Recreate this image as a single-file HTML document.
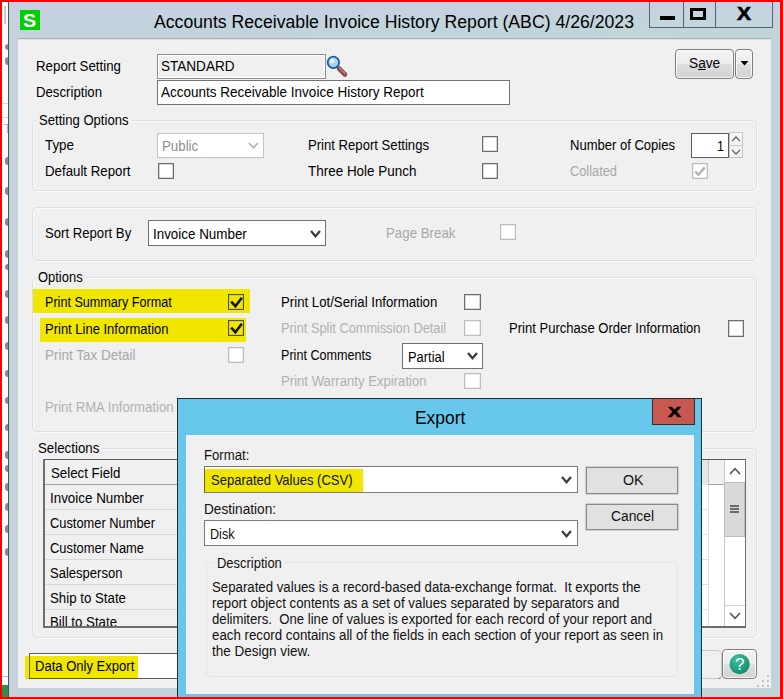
<!DOCTYPE html>
<html lang="en"><head><meta charset="utf-8"><title>Accounts Receivable Invoice History Report</title>
<style>
html,body{margin:0;padding:0;}
body{width:783px;height:699px;overflow:hidden;background:#f00;font-family:"Liberation Sans",sans-serif;}
#root{position:relative;width:783px;height:699px;overflow:hidden;background:#f00;}
#root div{position:absolute;box-sizing:border-box;}
#root svg{position:absolute;overflow:visible;}
.t{position:absolute;white-space:nowrap;transform-origin:0 0;color:#000;}
.cb{background:#fff;border:1px solid #6c6c6c;box-shadow:inset 0 0 0 .5px #b0b0b0;}
.cbd{background:#fff;border:1px solid #b9bfc5;box-shadow:inset 0 0 0 .5px #d5dade;}
.gb{border:1px solid #d7e0e6;border-radius:5px;box-shadow:inset 1px 1px 0 rgba(255,255,255,.7),1px 1px 0 rgba(255,255,255,.7);}
.lbl{background:#f0f0f0;}
.btn7{border:1px solid #7f7f7f;border-radius:4px;background:linear-gradient(#f4f4f4 0%,#ececec 48%,#dedede 52%,#d2d2d2 100%);box-shadow:inset 0 0 0 1px rgba(255,255,255,.75);}
.btnx{border:1px solid #8a8a8a;background:#e1e1e1;box-shadow:0 0 0 .5px #adadad;}
.combo{background:#fff;border:1px solid #707070;}
</style></head><body>
<div id="root">
<div style="left:2px;top:2px;width:7px;height:695px;background:#fff;"></div>
<div style="left:8px;top:2px;width:1px;height:695px;background:#4a4f55;"></div>
<div style="left:2px;top:685px;width:6px;height:12px;background:#2f8f4e;"></div>
<div style="left:2px;top:676px;width:6px;height:1px;background:#bbb;"></div>
<div style="left:5px;top:44px;width:3px;height:6px;background:#5d627a;border-radius:3px 0 0 3px;opacity:.75;"></div>
<div style="left:5px;top:57px;width:3px;height:8px;background:#5d627a;border-radius:3px 0 0 3px;opacity:.75;"></div>
<div style="left:5px;top:157px;width:3px;height:8px;background:#5d627a;border-radius:3px 0 0 3px;opacity:.75;"></div>
<div style="left:5px;top:187px;width:3px;height:8px;background:#5d627a;border-radius:3px 0 0 3px;opacity:.75;"></div>
<div style="left:5px;top:218px;width:3px;height:8px;background:#5d627a;border-radius:3px 0 0 3px;opacity:.75;"></div>
<div style="left:5px;top:250px;width:3px;height:8px;background:#5d627a;border-radius:3px 0 0 3px;opacity:.75;"></div>
<div style="left:5px;top:264px;width:3px;height:6px;background:#5d627a;border-radius:3px 0 0 3px;opacity:.75;"></div>
<div style="left:5px;top:290px;width:3px;height:8px;background:#5d627a;border-radius:3px 0 0 3px;opacity:.75;"></div>
<div style="left:5px;top:316px;width:3px;height:8px;background:#5d627a;border-radius:3px 0 0 3px;opacity:.75;"></div>
<div style="left:5px;top:342px;width:3px;height:8px;background:#5d627a;border-radius:3px 0 0 3px;opacity:.75;"></div>
<div style="left:5px;top:370px;width:3px;height:7px;background:#5d627a;border-radius:3px 0 0 3px;opacity:.75;"></div>
<div style="left:5px;top:397px;width:3px;height:7px;background:#5d627a;border-radius:3px 0 0 3px;opacity:.75;"></div>
<div style="left:5px;top:424px;width:3px;height:7px;background:#5d627a;border-radius:3px 0 0 3px;opacity:.75;"></div>
<div style="left:5px;top:451px;width:3px;height:8px;background:#5d627a;border-radius:3px 0 0 3px;opacity:.75;"></div>
<div style="left:5px;top:465px;width:3px;height:7px;background:#5d627a;border-radius:3px 0 0 3px;opacity:.75;"></div>
<div style="left:5px;top:483px;width:3px;height:8px;background:#5d627a;border-radius:3px 0 0 3px;opacity:.75;"></div>
<div style="left:5px;top:503px;width:3px;height:8px;background:#5d627a;border-radius:3px 0 0 3px;opacity:.75;"></div>
<div style="left:5px;top:525px;width:3px;height:8px;background:#5d627a;border-radius:3px 0 0 3px;opacity:.75;"></div>
<div style="left:5px;top:548px;width:3px;height:8px;background:#5d627a;border-radius:3px 0 0 3px;opacity:.75;"></div>
<div style="left:4px;top:6px;width:2px;height:18px;background:#c9c9c9;"></div>
<div style="left:4px;top:124px;width:4px;height:9px;border:1px solid #b5b5b5;border-bottom:none;border-left:none;"></div>
<div style="left:2px;top:103px;width:6px;height:1px;background:#d9d9d9;"></div>
<div style="left:2px;top:117px;width:6px;height:1px;background:#d9d9d9;"></div>
<div style="left:9px;top:2px;width:771px;height:695px;background:linear-gradient(90deg,#c3d2dd 0%,#c2d4dc 50%,#c0d5da 100%);"></div>
<div style="left:9px;top:2px;width:771px;height:37px;background:linear-gradient(180deg,rgba(202,206,232,.55) 0%,rgba(202,206,232,.5) 36%,rgba(202,206,232,0) 46%);"></div>
<div style="left:18px;top:38px;width:753px;height:1px;background:#a3b0b6;"></div>
<div style="left:18px;top:39px;width:753px;height:649px;background:#f0f0f0;border-top:1px solid #dfe3e7;"></div>
<div style="left:20px;top:10px;width:20px;height:20px;background:#00d000;"></div>
<div style="left:649px;top:2px;width:124px;height:26px;border:1px solid #55626d;border-top:none;background:rgba(200,214,226,.35);"></div>
<div style="left:683px;top:2px;width:1px;height:25px;background:#55626d;"></div>
<div style="left:715px;top:2px;width:1px;height:25px;background:#55626d;"></div>
<div style="left:660px;top:16px;width:15px;height:4px;background:#000;"></div>
<div style="left:690px;top:8px;width:16px;height:12px;border:3px solid #000;border-top-width:3px;"></div>
<div style="left:157px;top:54px;width:169px;height:25px;background:#f0f0f0;border:1px solid #8c8c8c;box-shadow:inset 0 0 0 1px #fff;"></div>
<div style="left:157px;top:80px;width:353px;height:25px;background:#fff;border:1px solid #747474;"></div>
<svg style="left:325px;top:54px" width="24" height="24" viewBox="0 0 24 24"><path d="M14 14.5 L20 20.5" stroke="#8a4b49" stroke-width="4.6" stroke-linecap="round"/><path d="M14.5 14 L20 19.6" stroke="#b98782" stroke-width="1.4" stroke-linecap="round"/><circle cx="8.4" cy="8.4" r="5.7" fill="#a9d2f5" stroke="#1d5fa3" stroke-width="1.8"/><circle cx="7.2" cy="7.0" r="2.4" fill="#e4f2fd"/></svg>
<div class="btn7" style="left:675px;top:49px;width:59px;height:30px;"></div>
<div class="btn7" style="left:735px;top:49px;width:18px;height:30px;"></div>
<svg style="left:740px;top:61px" width="9" height="5" viewBox="0 0 9 5"><path d="M0.5 0 L8.5 0 L4.5 4.6 Z" fill="#000"/></svg>
<div class="gb" style="left:32px;top:120px;width:725px;height:71px;"></div>
<div class="lbl" style="left:36px;top:112px;width:95px;height:16px;"></div>
<div style="left:157px;top:133px;width:107px;height:25px;background:#fff;border:1px solid #c3c3c3;"></div>
<svg style="left:248px;top:142px" width="11" height="7" viewBox="0 0 11 7"><path d="M1 1 L5.5 5.8 L10 1" stroke="#b0b0b0" stroke-width="1.6" fill="none"/></svg>
<div class="cb" style="left:158px;top:163px;width:16px;height:16px;"></div>
<div class="cb" style="left:482px;top:136px;width:16px;height:16px;"></div>
<div class="cb" style="left:482px;top:163px;width:16px;height:16px;"></div>
<div style="left:691px;top:133px;width:38px;height:25px;background:#fff;border:1px solid #5a5a5a;"></div>
<div style="left:729px;top:132px;width:14px;height:14px;background:#f6f6f6;border:1px solid #c8c8c8;"></div>
<div style="left:729px;top:145px;width:14px;height:13px;background:#f6f6f6;border:1px solid #c8c8c8;"></div>
<svg style="left:731px;top:136px" width="10" height="6" viewBox="0 0 10 6"><path d="M1 5 L5 1 L9 5" stroke="#666" stroke-width="1.3" fill="none"/></svg>
<svg style="left:731px;top:149px" width="10" height="6" viewBox="0 0 10 6"><path d="M1 1 L5 5 L9 1" stroke="#666" stroke-width="1.3" fill="none"/></svg>
<div class="cbd" style="left:692px;top:163px;width:16px;height:16px;"></div>
<svg style="left:694px;top:166px" width="12" height="11" viewBox="0 0 12 11"><path d="M1.2 5.4 L4.5 8.8 L10.8 1.4" stroke="#b4b4b4" stroke-width="2.4" fill="none"/></svg>
<div class="gb" style="left:32px;top:207px;width:725px;height:54px;"></div>
<div class="combo" style="left:148px;top:220px;width:178px;height:26px;"></div>
<svg style="left:310px;top:230px" width="11" height="8" viewBox="0 0 11 8"><path d="M1 1 L5.5 6.2 L10 1" stroke="#3c3c3c" stroke-width="2.3" fill="none"/></svg>
<div class="cbd" style="left:500px;top:224px;width:16px;height:16px;"></div>
<div class="gb" style="left:32px;top:277px;width:725px;height:155px;"></div>
<div class="lbl" style="left:36px;top:270px;width:50px;height:15px;"></div>
<div style="left:33px;top:289px;width:217px;height:24px;background:#f0e600;"></div>
<div style="left:40px;top:318px;width:206px;height:24px;background:#f0e600;"></div>
<div class="cb" style="left:228px;top:294px;width:16px;height:16px;background:#f0e600;border:1px solid #5a5600;"></div>
<svg style="left:228px;top:294px" width="16" height="16" viewBox="0 0 16 16"><path d="M3.2 7.6 L7.4 12.2 L13.8 3.8" stroke="#141400" stroke-width="2.6" fill="none"/></svg>
<div class="cb" style="left:228px;top:320px;width:16px;height:16px;background:#f0e600;border:1px solid #5a5600;"></div>
<svg style="left:228px;top:320px" width="16" height="16" viewBox="0 0 16 16"><path d="M3.2 7.6 L7.4 12.2 L13.8 3.8" stroke="#141400" stroke-width="2.6" fill="none"/></svg>
<div class="cbd" style="left:228px;top:347px;width:16px;height:16px;"></div>
<div class="cb" style="left:464px;top:294px;width:17px;height:16px;"></div>
<div class="cbd" style="left:464px;top:320px;width:17px;height:16px;"></div>
<div class="cbd" style="left:464px;top:373px;width:17px;height:16px;"></div>
<div class="combo" style="left:402px;top:343px;width:81px;height:26px;"></div>
<svg style="left:467px;top:352px" width="11" height="8" viewBox="0 0 11 8"><path d="M1 1 L5.5 6.2 L10 1" stroke="#3c3c3c" stroke-width="2.3" fill="none"/></svg>
<div class="cb" style="left:728px;top:320px;width:16px;height:17px;"></div>
<div class="gb" style="left:32px;top:448px;width:725px;height:190px;"></div>
<div class="lbl" style="left:36px;top:440px;width:66px;height:16px;"></div>
<div style="left:43px;top:459px;width:703px;height:169px;background:#f0f0f0;border:2px solid #6e6e6e;border-top-width:1px;border-top-color:#5a5a5a;"></div>
<div style="left:45px;top:509px;width:679px;height:1px;background:#d8d8d8;"></div>
<div style="left:45px;top:534px;width:679px;height:1px;background:#d8d8d8;"></div>
<div style="left:45px;top:559px;width:679px;height:1px;background:#d8d8d8;"></div>
<div style="left:45px;top:584px;width:679px;height:1px;background:#d8d8d8;"></div>
<div style="left:45px;top:609px;width:679px;height:1px;background:#d8d8d8;"></div>
<div style="left:45px;top:484px;width:679px;height:1px;background:#a2a2a2;"></div>
<div style="left:702px;top:485px;width:22px;height:141px;background:#fff;"></div>
<div style="left:702px;top:460px;width:7px;height:25px;background:#e6e6e6;border-right:1px solid #c4c4c4;"></div>
<div style="left:708px;top:485px;width:1px;height:141px;background:#dcdcdc;"></div>
<div style="left:702px;top:509px;width:7px;height:1px;background:#dedede;"></div>
<div style="left:702px;top:534px;width:7px;height:1px;background:#dedede;"></div>
<div style="left:702px;top:559px;width:7px;height:1px;background:#dedede;"></div>
<div style="left:702px;top:584px;width:7px;height:1px;background:#dedede;"></div>
<div style="left:702px;top:609px;width:7px;height:1px;background:#dedede;"></div>
<div style="left:724px;top:460px;width:21px;height:166px;background:#fff;border-left:1px solid #c9c9c9;"></div>
<div style="left:724px;top:482px;width:21px;height:55px;background:#dadada;border:1px solid #bdbdbd;"></div>
<div style="left:730px;top:505px;width:9px;height:2px;background:#6a6a6a;"></div>
<div style="left:730px;top:508px;width:9px;height:2px;background:#6a6a6a;"></div>
<div style="left:730px;top:511px;width:9px;height:2px;background:#6a6a6a;"></div>
<svg style="left:729px;top:467px" width="12" height="8" viewBox="0 0 12 8"><path d="M1 7 L6 1.6 L11 7" stroke="#555" stroke-width="1.6" fill="none"/></svg>
<div style="left:724px;top:605px;width:21px;height:1px;background:#d0d0d0;"></div>
<svg style="left:729px;top:612px" width="12" height="8" viewBox="0 0 12 8"><path d="M1 1 L6 6.4 L11 1" stroke="#555" stroke-width="1.6" fill="none"/></svg>
<div style="left:45px;top:610px;width:300px;height:16px;overflow:hidden;"><span class="t" style="left:4.9px;top:4.3px;font-size:15.5px;line-height:15.5px;transform:scaleX(.855)">Bill to State</span></div>
<div style="left:29px;top:653px;width:693px;height:26px;background:#fff;border:1px solid #5c5c5c;border-right-color:#c8c8c8;border-radius:0 4px 4px 0;"></div>
<div style="left:25px;top:656px;width:113px;height:23px;background:#f0e600;"></div>
<div style="left:29px;top:656px;width:1px;height:23px;background:#6b6810;"></div>
<div style="left:29px;top:678px;width:109px;height:1px;background:#5e5b08;"></div>
<div style="left:702px;top:650px;width:20px;height:29px;background:#f0f0f0;border:1px solid #c9c9c9;border-left:none;border-radius:0 5px 5px 0;"></div>
<div class="btn7" style="left:722px;top:649px;width:35px;height:30px;"></div>
<svg style="left:727px;top:652px" width="25" height="25" viewBox="0 0 25 25"><defs><radialGradient id="hg" cx="40%" cy="30%" r="75%"><stop offset="0" stop-color="#3fc4a0"/><stop offset="1" stop-color="#0c8a68"/></radialGradient></defs><circle cx="12.6" cy="12.1" r="10.1" fill="url(#hg)"/><text x="12.7" y="18.1" text-anchor="middle" font-family="Liberation Sans, sans-serif" font-size="17" fill="#fff">?</text></svg>
<div style="left:767px;top:675px;width:2px;height:2px;background:#bcc4cb;"></div>
<div style="left:762px;top:680px;width:2px;height:2px;background:#bcc4cb;"></div>
<div style="left:767px;top:680px;width:2px;height:2px;background:#bcc4cb;"></div>
<div style="left:757px;top:685px;width:2px;height:2px;background:#bcc4cb;"></div>
<div style="left:762px;top:685px;width:2px;height:2px;background:#bcc4cb;"></div>
<div style="left:767px;top:685px;width:2px;height:2px;background:#bcc4cb;"></div>
<div style="left:177px;top:398px;width:525px;height:299px;background:#66c7ea;border:1px solid #2b2b2b;border-bottom:none;"></div>
<div style="left:186px;top:435px;width:508px;height:259px;background:#f0f0f0;"></div>
<div style="left:652px;top:399px;width:43px;height:26px;background:#c75a50;border:1px solid #3a2a2a;border-top:none;"></div>
<div style="left:204px;top:466px;width:374px;height:27px;background:#fff;border:1px solid #7a7a7a;"></div>
<div style="left:204px;top:469px;width:159px;height:23px;background:#f0e600;border-left:1px solid #6b6800;"></div>
<svg style="left:561px;top:476px" width="11" height="8" viewBox="0 0 11 8"><path d="M1 1 L5.5 6.2 L10 1" stroke="#3c3c3c" stroke-width="2.3" fill="none"/></svg>
<div style="left:204px;top:520px;width:374px;height:26px;background:#fff;border:1px solid #7a7a7a;"></div>
<svg style="left:561px;top:530px" width="11" height="8" viewBox="0 0 11 8"><path d="M1 1 L5.5 6.2 L10 1" stroke="#3c3c3c" stroke-width="2.3" fill="none"/></svg>
<div class="btnx" style="left:586px;top:467px;width:92px;height:27px;"></div>
<div class="btnx" style="left:586px;top:504px;width:92px;height:26px;"></div>
<div style="left:206px;top:562px;width:472px;height:115px;border:1px solid #e1e5e8;border-radius:4px;"></div>
<div class="lbl" style="left:213px;top:555px;width:72px;height:15px;"></div>
<span class="t" style="left:23.3px;top:13px;font-size:17.5px;line-height:17.5px;color:#fff;transform:scaleX(1.1294);font-weight:bold;">S</span>
<span class="t" style="left:154px;top:13px;font-size:18.3px;line-height:18.3px;transform:scaleX(0.9660);">Accounts Receivable Invoice History Report (ABC) 4/26/2023</span>
<span class="t" style="left:736.6px;top:6px;font-size:17.5px;line-height:17.5px;transform:scaleX(1.1979);font-weight:bold;-webkit-text-stroke:.6px #000;">X</span>
<span class="t" style="left:36px;top:58px;font-size:15.5px;line-height:15.5px;transform:scaleX(0.8578);">Report Setting</span>
<span class="t" style="left:36px;top:84px;font-size:15.5px;line-height:15.5px;transform:scaleX(0.8513);">Description</span>
<span class="t" style="left:161px;top:58px;font-size:15.5px;line-height:15.5px;transform:scaleX(0.8739);">STANDARD</span>
<span class="t" style="left:161px;top:84px;font-size:15.5px;line-height:15.5px;transform:scaleX(0.8712);">Accounts Receivable Invoice History Report</span>
<span class="t" style="left:689px;top:55px;font-size:15.5px;line-height:15.5px;transform:scaleX(0.8828);">S<u>a</u>ve</span>
<span class="t" style="left:38.5px;top:112px;font-size:15.5px;line-height:15.5px;transform:scaleX(0.8445);">Setting Options</span>
<span class="t" style="left:45.3px;top:137px;font-size:15.5px;line-height:15.5px;transform:scaleX(0.8629);">Type</span>
<span class="t" style="left:45.3px;top:163px;font-size:15.5px;line-height:15.5px;transform:scaleX(0.8554);">Default Report</span>
<span class="t" style="left:162.3px;top:138px;font-size:15.5px;line-height:15.5px;color:#8e8e8e;transform:scaleX(0.8574);">Public</span>
<span class="t" style="left:307.6px;top:137px;font-size:15.5px;line-height:15.5px;transform:scaleX(0.8461);">Print Report Settings</span>
<span class="t" style="left:307.6px;top:163px;font-size:15.5px;line-height:15.5px;transform:scaleX(0.8684);">Three Hole Punch</span>
<span class="t" style="left:570px;top:137px;font-size:15.5px;line-height:15.5px;transform:scaleX(0.8405);">Number of Copies</span>
<span class="t" style="left:570px;top:163px;font-size:15.5px;line-height:15.5px;color:#a8a8a8;transform:scaleX(0.8264);">Collated</span>
<span class="t" style="left:716.5px;top:138px;font-size:15.5px;line-height:15.5px;transform:scaleX(0.8116);">1</span>
<span class="t" style="left:44.8px;top:225px;font-size:15.5px;line-height:15.5px;transform:scaleX(0.8480);">Sort Report By</span>
<span class="t" style="left:153px;top:226px;font-size:15.5px;line-height:15.5px;transform:scaleX(0.8641);">Invoice Number</span>
<span class="t" style="left:386.3px;top:225px;font-size:15.5px;line-height:15.5px;color:#a8a8a8;transform:scaleX(0.8580);">Page Break</span>
<span class="t" style="left:38.4px;top:269px;font-size:15.5px;line-height:15.5px;transform:scaleX(0.8349);">Options</span>
<span class="t" style="left:45px;top:294px;font-size:15.5px;line-height:15.5px;transform:scaleX(0.8127);">Print Summary Format</span>
<span class="t" style="left:45px;top:321px;font-size:15.5px;line-height:15.5px;transform:scaleX(0.8383);">Print Line Information</span>
<span class="t" style="left:45px;top:347px;font-size:15.5px;line-height:15.5px;color:#a8a8a8;transform:scaleX(0.8696);">Print Tax Detail</span>
<span class="t" style="left:44.8px;top:399px;font-size:15.5px;line-height:15.5px;color:#b0b0b0;transform:scaleX(0.8476);">Print RMA Information</span>
<span class="t" style="left:281.4px;top:294px;font-size:15.5px;line-height:15.5px;transform:scaleX(0.8517);">Print Lot/Serial Information</span>
<span class="t" style="left:281.4px;top:320px;font-size:15.5px;line-height:15.5px;color:#b0b0b0;transform:scaleX(0.8266);">Print Split Commission Detail</span>
<span class="t" style="left:281.4px;top:347px;font-size:15.5px;line-height:15.5px;transform:scaleX(0.8126);">Print Comments</span>
<span class="t" style="left:281.4px;top:373px;font-size:15.5px;line-height:15.5px;color:#b0b0b0;transform:scaleX(0.8479);">Print Warranty Expiration</span>
<span class="t" style="left:407.5px;top:349px;font-size:15.5px;line-height:15.5px;transform:scaleX(0.8330);">Partial</span>
<span class="t" style="left:508.7px;top:320px;font-size:15.5px;line-height:15.5px;transform:scaleX(0.8424);">Print Purchase Order Information</span>
<span class="t" style="left:38.4px;top:440px;font-size:15.5px;line-height:15.5px;transform:scaleX(0.8572);">Selections</span>
<span class="t" style="left:51px;top:465px;font-size:15.5px;line-height:15.5px;transform:scaleX(0.8570);">Select Field</span>
<span class="t" style="left:49.9px;top:490px;font-size:15.5px;line-height:15.5px;transform:scaleX(0.8641);">Invoice Number</span>
<span class="t" style="left:49.9px;top:515px;font-size:15.5px;line-height:15.5px;transform:scaleX(0.8292);">Customer Number</span>
<span class="t" style="left:49.9px;top:540px;font-size:15.5px;line-height:15.5px;transform:scaleX(0.8330);">Customer Name</span>
<span class="t" style="left:49.9px;top:565px;font-size:15.5px;line-height:15.5px;transform:scaleX(0.8413);">Salesperson</span>
<span class="t" style="left:49.9px;top:590px;font-size:15.5px;line-height:15.5px;transform:scaleX(0.8562);">Ship to State</span>
<span class="t" style="left:35px;top:658px;font-size:15.5px;line-height:15.5px;transform:scaleX(0.8413);">Data Only Export</span>
<span class="t" style="left:668.2px;top:404px;font-size:15.5px;line-height:15.5px;transform:scaleX(1.2471);font-weight:bold;-webkit-text-stroke:.6px #000;">X</span>
<span class="t" style="left:414.5px;top:410px;font-size:17.5px;line-height:17.5px;transform:scaleX(0.9945);">Export</span>
<span class="t" style="left:204.4px;top:447px;font-size:15.5px;line-height:15.5px;color:#111;transform:scaleX(0.8482);">Format:</span>
<span class="t" style="left:210.5px;top:472px;font-size:15.5px;line-height:15.5px;color:#111;transform:scaleX(0.8394);">Separated Values (CSV)</span>
<span class="t" style="left:204.4px;top:501px;font-size:15.5px;line-height:15.5px;color:#111;transform:scaleX(0.8796);">Destination:</span>
<span class="t" style="left:210.4px;top:526px;font-size:15.5px;line-height:15.5px;color:#111;transform:scaleX(0.8129);">Disk</span>
<span class="t" style="left:622.8px;top:472px;font-size:15.5px;line-height:15.5px;color:#111;transform:scaleX(0.9194);">OK</span>
<span class="t" style="left:610.5px;top:508px;font-size:15.5px;line-height:15.5px;color:#111;transform:scaleX(0.8912);">Cancel</span>
<span class="t" style="left:216.5px;top:555px;font-size:15.5px;line-height:15.5px;color:#111;transform:scaleX(0.8358);">Description</span>
<span class="t" style="left:211.8px;top:579px;font-size:15.5px;line-height:15.5px;color:#111;transform:scaleX(0.8535);white-space:pre;">Separated values is a record-based data-exchange format.  It exports the</span>
<span class="t" style="left:211.8px;top:595px;font-size:15.5px;line-height:15.5px;color:#111;transform:scaleX(0.8568);white-space:pre;">report object contents as a set of values separated by separators and</span>
<span class="t" style="left:211.8px;top:611px;font-size:15.5px;line-height:15.5px;color:#111;transform:scaleX(0.8487);white-space:pre;">delimiters.  One line of values is exported for each record of your report and</span>
<span class="t" style="left:211.8px;top:627px;font-size:15.5px;line-height:15.5px;color:#111;transform:scaleX(0.8571);white-space:pre;">each record contains all of the fields in each section of your report as seen in</span>
<span class="t" style="left:211.8px;top:643px;font-size:15.5px;line-height:15.5px;color:#111;transform:scaleX(0.8709);white-space:pre;">the Design view.</span>
</div>
</body></html>
